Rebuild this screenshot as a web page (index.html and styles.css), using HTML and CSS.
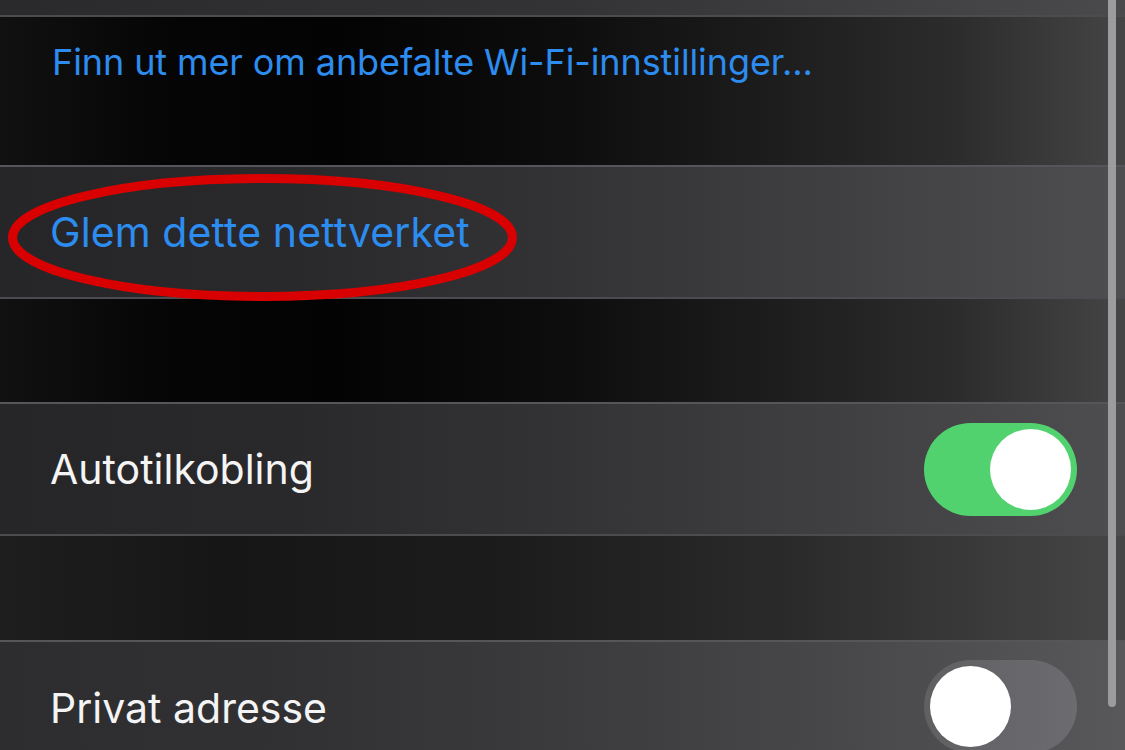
FILE: index.html
```html
<!DOCTYPE html>
<html lang="no">
<head>
<meta charset="utf-8">
<title>Wi-Fi</title>
<link rel="stylesheet" href="styles.css">
</head>
<body>
<div class="screen">
  <div class="row row-top"></div>
  <div class="band band-footer">
    <span class="link small">Finn ut mer om anbefalte Wi-Fi-innstillinger...</span>
  </div>
  <div class="row row-forget">
    <span class="link">Glem dette nettverket</span>
    <svg class="circle-mark" width="520" height="140" viewBox="0 0 520 140">
      <ellipse cx="262.5" cy="67.5" rx="250" ry="59" fill="none" stroke="#d80000" stroke-width="9"/>
    </svg>
  </div>
  <div class="band"></div>
  <div class="row">
    <span class="label">Autotilkobling</span>
    <div class="toggle on"><div class="knob"></div></div>
  </div>
  <div class="band band-low"></div>
  <div class="row row-low">
    <span class="label">Privat adresse</span>
    <div class="toggle off"><div class="knob"></div></div>
  </div>
  <div class="scrollbar"></div>
</div>
</body>
</html>
```
FILE: styles.css
```css
* { box-sizing: border-box; }
html, body {
  margin: 0;
  padding: 0;
  width: 1125px;
  height: 750px;
  overflow: hidden;
  background: #000;
}
.screen {
  position: relative;
  width: 1125px;
  height: 750px;
  display: flex;
  flex-direction: column;
  font-family: Inter, "Noto Sans", "Liberation Sans", sans-serif;
}
.row {
  flex: none;
  height: 132px;
  display: flex;
  align-items: center;
  justify-content: space-between;
  padding: 0 48px 0 50px;
  border-top: 2px solid #56565a;
  background: linear-gradient(90deg, #262628 0%, #29292b 25%, #333335 50%, #404042 75%, #4e4e50 100%);
  position: relative;
}
.row-top {
  height: 15px;
  border-top: none;
  background: linear-gradient(90deg, #2a2a2c 0%, #333335 50%, #4a4a4c 100%);
}
.row-forget { height: 132px; }
.row-low {
  height: 135px;
  background: linear-gradient(90deg, #2d2d2f 0%, #313133 25%, #3b3b3d 50%, #48484a 75%, #58585a 100%);
}
.band {
  flex: none;
  height: 105px;
  border-top: 2px solid #4c4c50;
  background: linear-gradient(90deg, #111 0%, #050505 15%, #030303 30%, #0d0d0d 50%, #1e1e1e 70%, #2c2c2c 85%, #454545 100%);
}
.band-footer {
  height: 150px;
  padding: 27px 0 0 52px;
}
.band-low {
  height: 106px;
  background: linear-gradient(90deg, #1e1e1e 0%, #161616 20%, #1c1c1c 45%, #2a2a2a 70%, #383838 85%, #464646 100%);
}
.link {
  color: #2d8cef;
  font-size: 41px;
  line-height: 1;
  letter-spacing: 0.1px;
}
.link.small {
  font-size: 36px;
  letter-spacing: -0.1px;
  display: block;
}
.label {
  color: #f4f4f4;
  font-size: 41px;
  line-height: 1;
}
.circle-mark {
  position: absolute;
  left: 0;
  top: 3px;
  pointer-events: none;
}
.toggle {
  flex: none;
  width: 153px;
  height: 93px;
  border-radius: 47px;
  padding: 6px;
  display: flex;
  align-items: center;
}
.toggle.on {
  background: #52d26f;
  justify-content: flex-end;
}
.toggle.off {
  background: linear-gradient(90deg, #606063 0%, #6c6c70 100%);
  justify-content: flex-start;
  align-self: flex-start;
  margin-top: 18px;
}
.knob {
  width: 81px;
  height: 81px;
  border-radius: 50%;
  background: #fff;
}
.scrollbar {
  position: absolute;
  left: 1108px;
  top: 0;
  width: 8px;
  height: 707px;
  border-radius: 0 0 4px 4px;
  background: #9c9c9e;
}
```
